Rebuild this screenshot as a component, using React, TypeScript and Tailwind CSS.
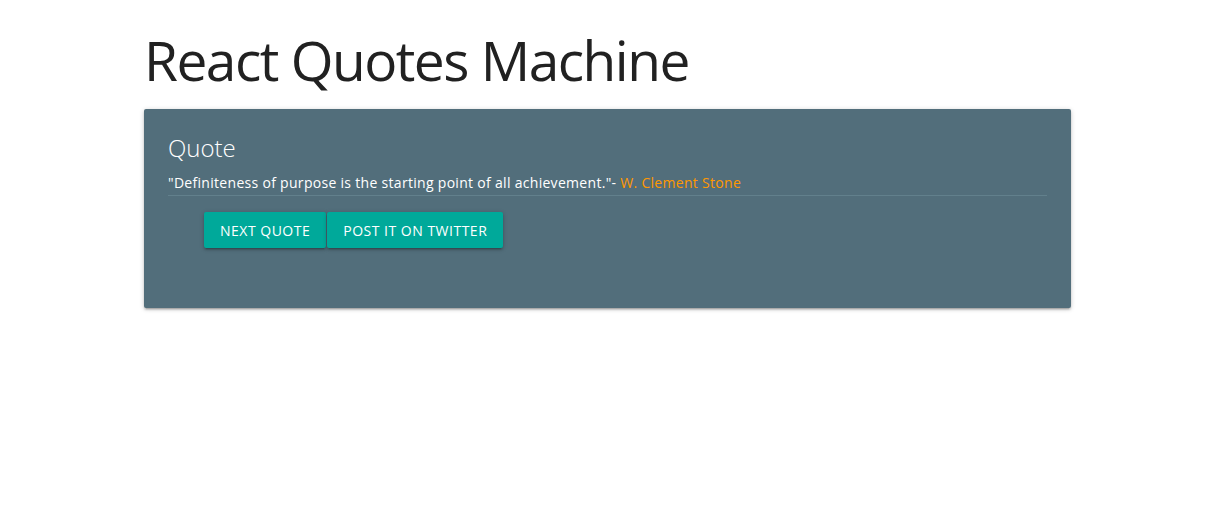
export default function App() {
  return (
    <div className="min-h-[519px] bg-white font-['Open_Sans',sans-serif] text-[#212121]">
      <div className="ml-[144px] w-[927px] pt-[20px]">
        <h1 className="text-[55px] leading-[80px] font-normal tracking-[-1.5px]">React Quotes Machine</h1>
        <div className="mt-[9px] h-[199px] rounded-[2px] bg-[#526e7b] px-6 pt-[23px] text-white shadow-[0_2px_2px_0_rgba(0,0,0,0.14),0_3px_1px_-2px_rgba(0,0,0,0.12),0_1px_5px_0_rgba(0,0,0,0.2)]">
          <div className="text-[24px] leading-[32px] font-light">Quote</div>
          <p className="mt-[9px] border-b border-[#62808c] pb-[2px] text-[14px] leading-[20px] tracking-[0.3px]">
            "Definiteness of purpose is the starting point of all achievement."-{" "}
            <span className="text-[#ff9800]">W. Clement Stone</span>
          </p>
          <div className="mt-4 ml-[36px] flex gap-px">
            <button className="h-9 rounded-[2px] bg-[#00a99a] px-4 text-[14px] tracking-[0.5px] uppercase text-white shadow-[0_2px_2px_0_rgba(0,0,0,0.14),0_3px_1px_-2px_rgba(0,0,0,0.12),0_1px_5px_0_rgba(0,0,0,0.2)]">
              Next Quote
            </button>
            <button className="h-9 rounded-[2px] bg-[#00a99a] px-4 text-[14px] tracking-[0.5px] uppercase text-white shadow-[0_2px_2px_0_rgba(0,0,0,0.14),0_3px_1px_-2px_rgba(0,0,0,0.12),0_1px_5px_0_rgba(0,0,0,0.2)]">
              Post it on Twitter
            </button>
          </div>
        </div>
      </div>
    </div>
  );
}
